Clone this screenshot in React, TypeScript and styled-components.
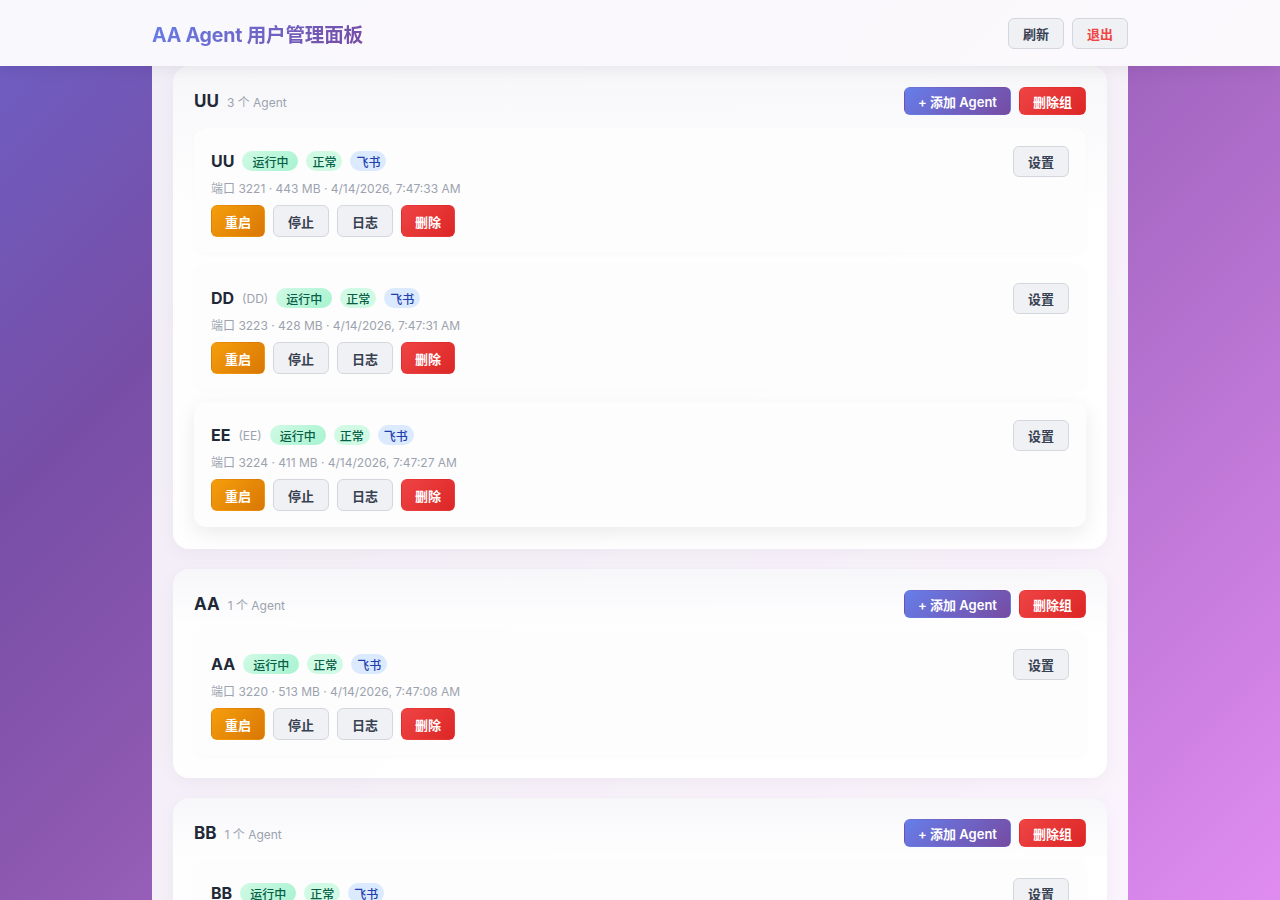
import React from 'react'
import styled, { createGlobalStyle, css } from 'styled-components'

const GlobalStyle = createGlobalStyle`
  * { box-sizing: border-box; }
  html, body {
    margin: 0;
    padding: 0;
  }
  body {
    min-height: 100vh;
    font-family: Inter, 'Noto Sans CJK SC', 'Noto Sans', sans-serif;
    background: linear-gradient(135deg, #6d5fc4 0%, #774ea6 23%, #8c58b0 41%, #e08cf0 100%);
    background-attachment: fixed;
    color: #1f2937;
  }
`

/* Header */
const Header = styled.header`
  height: 66px;
  background: rgba(255, 255, 255, 0.96);
  box-shadow: 0 2px 16px rgba(0, 0, 0, 0.08);
  position: relative;
  z-index: 2;
`
const HeaderInner = styled.div`
  width: 976px;
  height: 100%;
  margin: 0 auto;
  display: flex;
  align-items: center;
  justify-content: space-between;
`
const Title = styled.h1`
  margin: 0;
  font-size: 19.6px;
  font-weight: 700;
  letter-spacing: -0.2px;
  background: linear-gradient(135deg, #667eea 0%, #764ba2 100%);
  -webkit-background-clip: text;
  background-clip: text;
  color: transparent;
`
const HeaderActions = styled.div`
  display: flex;
  gap: 8px;
`

/* Buttons */
type BtnKind = 'primary' | 'danger' | 'warn' | 'plain' | 'exit'

const Button = styled.button<{ $kind: BtnKind; $h?: number; $w?: number }>`
  height: ${(p) => p.$h ?? 32}px;
  ${(p) => p.$w && `width: ${p.$w}px;`}
  padding: 0 12px;
  border-radius: 6px;
  border: 1px solid transparent;
  font-family: inherit;
  font-size: 13px;
  font-weight: 600;
  cursor: pointer;
  display: inline-flex;
  align-items: center;
  justify-content: center;
  white-space: nowrap;
  ${(p) =>
    p.$kind === 'primary' &&
    css`
      background: linear-gradient(135deg, #667eea 0%, #764ba2 100%);
      color: #fff;
    `}
  ${(p) =>
    p.$kind === 'danger' &&
    css`
      background: linear-gradient(135deg, #ef4444 0%, #dc2626 100%);
      color: #fff;
    `}
  ${(p) =>
    p.$kind === 'warn' &&
    css`
      background: linear-gradient(135deg, #f59e0b 0%, #d97706 100%);
      color: #fff;
    `}
  ${(p) =>
    p.$kind === 'plain' &&
    css`
      background: #f0f1f4;
      border-color: #d4d7dd;
      color: #374151;
    `}
  ${(p) =>
    p.$kind === 'exit' &&
    css`
      background: #f0f1f4;
      border-color: #d4d7dd;
      color: #ef4444;
    `}
`

/* Main column */
const Main = styled.main`
  width: 976px;
  margin: 0 auto;
  padding: 0 21px 20px;
  background: rgba(255, 255, 255, 0.9);
  min-height: calc(100vh - 66px);
  display: flex;
  flex-direction: column;
  gap: 20px;
`

/* Group */
const Group = styled.section`
  background: linear-gradient(180deg, rgba(247, 247, 250, 0.97) 0%, rgba(255, 255, 255, 0.97) 30%);
  border-radius: 16px;
  padding: 21px 21px 22px;
  box-shadow: 0 4px 18px rgba(0, 0, 0, 0.04);
  display: flex;
  flex-direction: column;
  gap: 12px;
`
const GroupHead = styled.div`
  display: flex;
  align-items: center;
  justify-content: space-between;
  height: 28px;
  margin-bottom: 1px;
`
const GroupTitle = styled.div`
  display: flex;
  align-items: baseline;
  gap: 8px;
`
const GroupName = styled.span`
  font-size: 17px;
  font-weight: 700;
  color: #1f2937;
`
const GroupCount = styled.span`
  font-size: 12px;
  color: #9ca3af;
`
const GroupActions = styled.div`
  display: flex;
  gap: 8px;
`

/* Agent card */
const Card = styled.div<{ $raised?: boolean }>`
  background: #fdfdfd;
  border-radius: 12px;
  padding: 18px 17px 16px;
  display: flex;
  justify-content: space-between;
  align-items: flex-start;
  box-shadow: ${(p) =>
    p.$raised ? '0 6px 20px rgba(0, 0, 0, 0.08)' : '0 1px 6px rgba(0, 0, 0, 0.025)'};
`
const CardBody = styled.div`
  display: flex;
  flex-direction: column;
`
const NameRow = styled.div`
  height: 30px;
  display: flex;
  align-items: center;
  gap: 8px;
`
const AgentName = styled.span`
  font-size: 16px;
  font-weight: 700;
  color: #1f2937;
`
const Alias = styled.span`
  font-size: 12px;
  color: #9ca3af;
`
const badgeStyles = {
  run: css`
    padding: 0 10px;
    background: linear-gradient(135deg, #d1fae5 0%, #a7f3d0 100%);
    color: #065f46;
  `,
  ok: css`
    padding: 0 6px;
    background: #d1fae5;
    color: #065f46;
  `,
  feishu: css`
    padding: 0 6px;
    background: #dbeafe;
    color: #1e40af;
  `,
}
const Badge = styled.span<{ $tone: keyof typeof badgeStyles }>`
  height: 20px;
  border-radius: 10px;
  font-size: 12px;
  font-weight: 500;
  display: inline-flex;
  align-items: center;
  ${(p) => badgeStyles[p.$tone]}
`
const Meta = styled.div`
  margin-top: 4px;
  font-size: 12px;
  line-height: 18px;
  color: #9ca3af;
`
const Actions = styled.div`
  margin-top: 7px;
  display: flex;
  gap: 8px;
`

type Agent = {
  name: string
  alias?: string
  port: number
  mem: number
  time: string
  raised?: boolean
}

type GroupData = { name: string; agents: Agent[] }

const groups: GroupData[] = [
  {
    name: 'UU',
    agents: [
      { name: 'UU', port: 3221, mem: 443, time: '4/14/2026, 7:47:33 AM' },
      { name: 'DD', alias: 'DD', port: 3223, mem: 428, time: '4/14/2026, 7:47:31 AM' },
      { name: 'EE', alias: 'EE', port: 3224, mem: 411, time: '4/14/2026, 7:47:27 AM', raised: true },
    ],
  },
  {
    name: 'AA',
    agents: [{ name: 'AA', port: 3220, mem: 513, time: '4/14/2026, 7:47:08 AM' }],
  },
  {
    name: 'BB',
    agents: [{ name: 'BB', port: 3222, mem: 436, time: '4/14/2026, 7:47:19 AM' }],
  },
]

const AgentCard = ({ agent }: { agent: Agent }) => (
  <Card $raised={agent.raised}>
    <CardBody>
      <NameRow>
        <AgentName>{agent.name}</AgentName>
        {agent.alias && <Alias>({agent.alias})</Alias>}
        <Badge $tone="run">运行中</Badge>
        <Badge $tone="ok">正常</Badge>
        <Badge $tone="feishu">飞书</Badge>
      </NameRow>
      <Meta>
        端口 {agent.port} · {agent.mem} MB · {agent.time}
      </Meta>
      <Actions>
        <Button $kind="warn" $w={54}>重启</Button>
        <Button $kind="plain" $w={56}>停止</Button>
        <Button $kind="plain" $w={56}>日志</Button>
        <Button $kind="danger" $w={54}>删除</Button>
      </Actions>
    </CardBody>
    <Button $kind="plain" $h={31} $w={56}>设置</Button>
  </Card>
)

const App = () => {
  return (
    <>
      <GlobalStyle />
      <Header>
        <HeaderInner>
          <Title>AA Agent 用户管理面板</Title>
          <HeaderActions>
            <Button $kind="plain" $h={31} $w={56}>刷新</Button>
            <Button $kind="exit" $h={31} $w={56}>退出</Button>
          </HeaderActions>
        </HeaderInner>
      </Header>
      <Main>
        {groups.map((g) => (
          <Group key={g.name}>
            <GroupHead>
              <GroupTitle>
                <GroupName>{g.name}</GroupName>
                <GroupCount>{g.agents.length} 个 Agent</GroupCount>
              </GroupTitle>
              <GroupActions>
                <Button $kind="primary" $h={28} $w={107}>+ 添加 Agent</Button>
                <Button $kind="danger" $h={28} $w={67}>删除组</Button>
              </GroupActions>
            </GroupHead>
            {g.agents.map((a) => (
              <AgentCard key={a.name} agent={a} />
            ))}
          </Group>
        ))}
      </Main>
    </>
  )
}

export default App
